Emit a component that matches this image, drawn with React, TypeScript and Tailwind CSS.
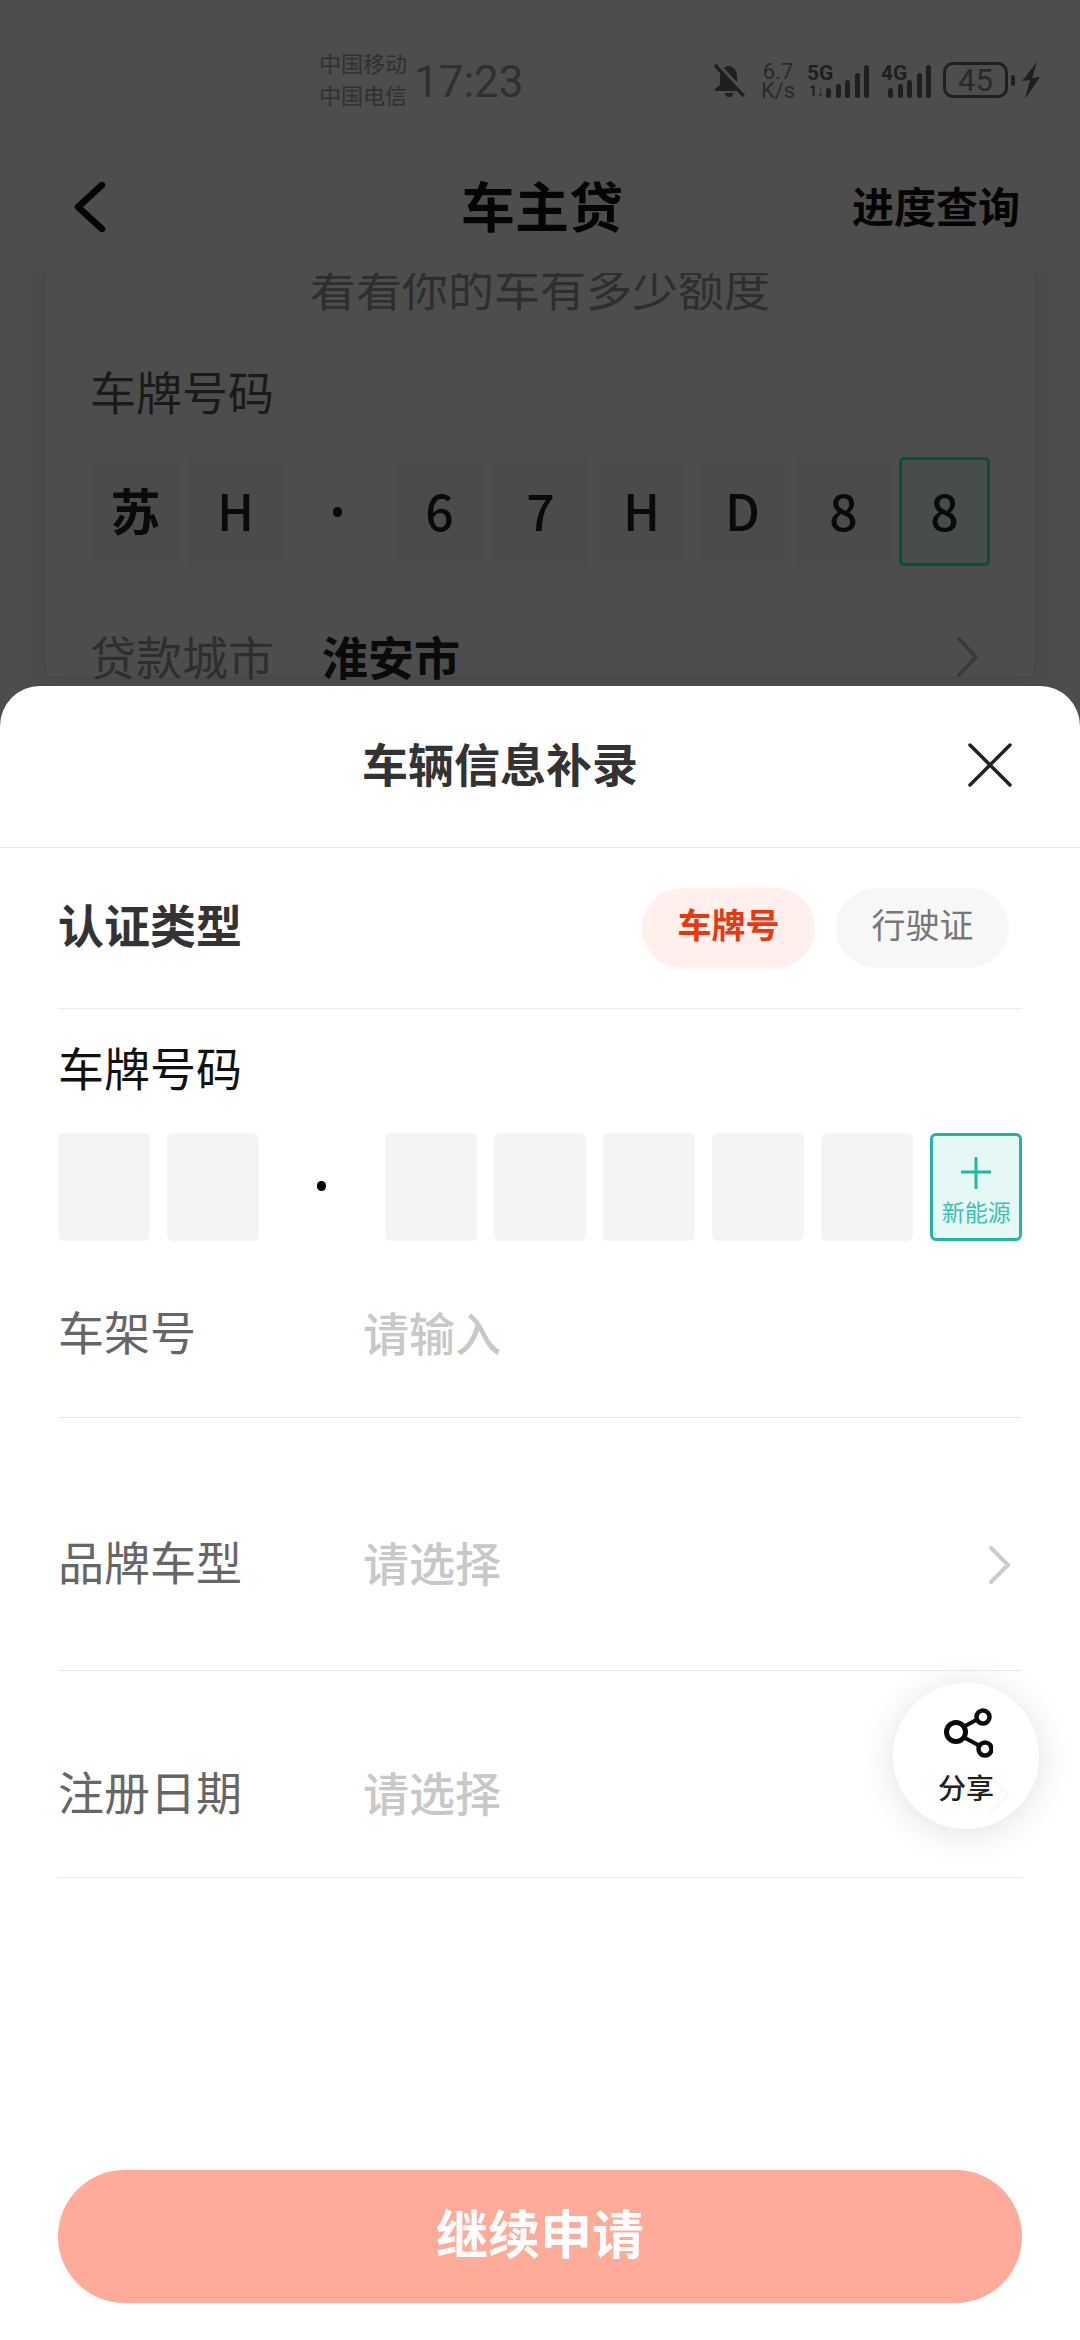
import React from "react";

const cjk = { fontFamily: '"Noto Sans CJK SC", "Noto Sans", sans-serif' };

function Bars({ heights }: { heights: number[] }) {
  return (
    <div className="flex items-end gap-[4.5px] h-[36px]">
      {heights.map((h, i) => (
        <div key={i} className="w-[5px] rounded-full bg-[#1f1f1f]" style={{ height: h }} />
      ))}
    </div>
  );
}

function StatusBar() {
  return (
    <div className="h-[141px] pt-[46px] flex items-start text-[#2c2c2c]">
      <div className="ml-[319px] w-[92px] flex flex-col text-[22px] leading-[32px] text-[#303030] whitespace-nowrap">
        <span>中国移动</span>
        <span>中国电信</span>
      </div>
      <span className="mt-[10px] ml-[3px] text-[44px] leading-[52px] text-[#303030]" style={{ fontFamily: "Roboto, sans-serif" }}>
        17:23
      </span>
      <div className="mt-[16px] ml-auto mr-[39px] flex items-start" style={{ fontFamily: "Roboto, sans-serif" }}>
        <svg width="32" height="36" viewBox="0 0 32 36" className="mt-[1px]">
          <path d="M16 3c-6 0-9 5-9 11v8l-5 4v2h27v-2l-5-4v-8c0-6-3-11-8-11z" fill="#1f1f1f" />
          <path d="M12 30a4 4 0 0 0 8 0z" fill="#1f1f1f" />
          <path d="M2 2l29 31" stroke="#1f1f1f" strokeWidth="3.5" />
          <path d="M6 2l27 29" stroke="#4d4d4d" strokeWidth="3" />
        </svg>
        <div className="ml-[12px] w-[42px] flex flex-col items-center text-[#2a2a2a] text-[22px] leading-[19px]">
          <span>6.7</span>
          <span>K/s</span>
        </div>
        <div className="ml-[8px] relative w-[62px] h-[36px]">
          <span className="absolute left-[0px] top-[1px] text-[21px] leading-[20px] font-bold text-[#1f1f1f]">5G</span>
          <span className="absolute left-[2px] top-[23px] text-[14px] leading-[13px] font-bold text-[#1f1f1f]">1↓</span>
          <div className="absolute left-[19px] top-0">
            <Bars heights={[10, 14, 18, 25, 33]} />
          </div>
        </div>
        <div className="ml-[12px] relative w-[51px] h-[36px]">
          <span className="absolute left-[0px] top-[1px] text-[21px] leading-[20px] font-bold text-[#1f1f1f]">4G</span>
          <div className="absolute left-[7px] top-0">
            <Bars heights={[10, 14, 18, 25, 33]} />
          </div>
        </div>
        <div className="ml-[11px] w-[65px] h-[36px] border-[3px] border-[#1f1f1f] rounded-[10px] flex items-center justify-center text-[31px] leading-none text-[#2a2a2a]">
          45
        </div>
        <div className="ml-[3px] mt-[13px] w-[4px] h-[11px] rounded-[2px] bg-[#1f1f1f]" />
        <svg width="20" height="37" viewBox="0 0 20 37" className="ml-[6px]">
          <path d="M16 0L1 19l8-1-5 19L19 15l-8 1z" fill="#1f1f1f" />
        </svg>
      </div>
    </div>
  );
}

function Header() {
  return (
    <div className="h-[132px] flex items-center relative text-[#050505]">
      <svg width="34" height="50" viewBox="0 0 34 50" className="ml-[72px]">
        <path d="M30 3L6 25l24 22" fill="none" stroke="#050505" strokeWidth="6.5" strokeLinecap="round" strokeLinejoin="round" />
      </svg>
      <span className="ml-[355px] mb-[4px] text-[54px] leading-[60px] font-bold whitespace-nowrap">车主贷</span>
      <span className="ml-[229px] mb-[4px] text-[42px] leading-[50px] font-bold whitespace-nowrap">进度查询</span>
    </div>
  );
}

function DarkBox({ c, active, bold }: { c: string; active?: boolean; bold?: boolean }) {
  return (
    <div
      className={`w-[91px] h-[109px] pb-[5px] rounded-[5px] flex items-center justify-center text-[#0a0a0a] text-[50px] ${
        active ? "border-[3px] border-[#0f4a3f] bg-[#474d4c]" : "bg-[#4a4b4b]"
      } ${bold ? "font-bold" : "font-medium"}`}
    >
      {c}
    </div>
  );
}

function Backdrop() {
  return (
    <div className="h-[413px] overflow-hidden bg-[#4c4c4c]">
      <div className="mx-[46px] h-[413px] bg-[#4d4d4d] shadow-[0_0_22px_rgba(0,0,0,0.08)] relative pl-[44px]">
        <div className="-mt-[10px] -ml-[44px] text-center text-[46px] leading-[46px] text-[#2e2e2e]">看看你的车有多少额度</div>
        <div className="mt-[58px] text-[46px] leading-[46px] text-[#1a1a1a]">车牌号码</div>
        <div className="mt-[44px] flex items-center">
          <DarkBox c="苏" bold />
          <div className="ml-[9px]">
            <DarkBox c="H" />
          </div>
          <div className="w-[113px] flex justify-center">
            <div className="w-[9px] h-[10px] rounded-full bg-[#0a0a0a]" />
          </div>
          <div className="flex gap-[10px]">
            <DarkBox c="6" />
            <DarkBox c="7" />
            <DarkBox c="H" />
            <DarkBox c="D" />
            <DarkBox c="8" />
            <DarkBox c="8" active />
          </div>
        </div>
        <div className="mt-[66px] flex items-center h-[46px]">
          <span className="w-[232px] text-[46px] leading-[46px] text-[#2e2e2e]">贷款城市</span>
          <span className="text-[46px] leading-[46px] font-bold text-[#0a0a0a]">淮安市</span>
          <svg width="24" height="42" viewBox="0 0 24 42" className="ml-auto mr-[55px] mt-[4px]">
            <path d="M3 2l18 19L3 40" fill="none" stroke="#3a3a3a" strokeWidth="3.5" />
          </svg>
        </div>
      </div>
    </div>
  );
}

function LightBox() {
  return <div className="w-[92px] h-[108px] rounded-[6px] bg-[#f3f4f5]" />;
}

function Chevron() {
  return (
    <svg width="24" height="40" viewBox="0 0 24 40" className="ml-auto mr-[10px] mt-[5px]">
      <path d="M3 3l17 17L3 37" fill="none" stroke="#cccccc" strokeWidth="4" strokeLinecap="round" strokeLinejoin="round" />
    </svg>
  );
}

function Row({ label, value, pt, h, chevron }: { label: string; value: string; pt: string; h: string; chevron?: boolean }) {
  return (
    <div className={`${h} ${pt} flex items-center border-b border-[#eaeaea]`}>
      <span className="w-[305px] pb-[5px] text-[46px] leading-[50px] text-[#666666]">{label}</span>
      <span className="pb-[3px] text-[46px] leading-[50px] font-medium text-[#c8c8c8]">{value}</span>
      {chevron && <Chevron />}
    </div>
  );
}

function Sheet() {
  return (
    <div className="flex-1 bg-white rounded-t-[40px] flex flex-col relative">
      <div className="h-[162px] pb-[4px] flex items-center border-b border-[#e8e8e8]">
        <span className="ml-[362px] mb-[6px] text-[46px] leading-[54px] font-bold text-[#333333] whitespace-nowrap">车辆信息补录</span>
        <svg width="46" height="46" viewBox="0 0 46 46" className="ml-[329px]">
          <path d="M3 3l40 40M43 3L3 43" fill="none" stroke="#222222" strokeWidth="3.5" strokeLinecap="round" />
        </svg>
      </div>
      <div className="px-[58px] flex flex-col flex-1">
        <div className="h-[161px] flex items-center border-b border-[#eeeeee]">
          <span className="pb-[10px] text-[46px] leading-[50px] font-bold text-[#333333]">认证类型</span>
          <div className="ml-auto mr-[13px] flex gap-[21px]">
            <div className="w-[173px] h-[80px] pb-[9px] rounded-full bg-[#ffefed] flex items-center justify-center text-[34px] font-bold text-[#e8380d]">车牌号</div>
            <div className="w-[173px] h-[80px] pb-[9px] rounded-full bg-[#f7f7f7] flex items-center justify-center text-[34px] text-[#777777]">行驶证</div>
          </div>
        </div>
        <div className="mt-[34px] text-[46px] leading-[46px] text-[#111111]">车牌号码</div>
        <div className="mt-[44px] flex items-center">
          <LightBox />
          <div className="ml-[17px]">
            <LightBox />
          </div>
          <div className="w-[127px] flex justify-center">
            <div className="w-[9px] h-[10px] rounded-full bg-black mb-[2px]" />
          </div>
          <div className="flex gap-[17px]">
            <LightBox />
            <LightBox />
            <LightBox />
            <LightBox />
            <LightBox />
          </div>
          <div className="ml-[17px] w-[92px] h-[108px] rounded-[6px] border-[3px] border-[#26b5a3] bg-[#e6f8f6] flex flex-col items-center">
            <svg width="30" height="32" viewBox="0 0 30 32" className="mt-[21px]">
              <path d="M15 1v30M1 15h28" stroke="#26b5a3" strokeWidth="3" strokeLinecap="round" />
            </svg>
            <span className="mt-[8px] text-[23px] leading-[28px] text-[#3fc0b2] whitespace-nowrap">新能源</span>
          </div>
        </div>
        <Row label="车架号" value="请输入" h="h-[177px]" pt="pt-[6px]" />
        <Row label="品牌车型" value="请选择" h="h-[253px]" pt="pt-[36px]" chevron />
        <Row label="注册日期" value="请选择" h="h-[207px]" pt="pt-[37px]" chevron />
        <div className="mt-auto mb-[37px] h-[133px] pb-[10px] rounded-full bg-[#ffab99] flex items-center justify-center text-[52px] font-bold text-white">继续申请</div>
      </div>
      <div className="absolute left-[893px] top-[997px] w-[146px] h-[146px] rounded-full bg-white/90 shadow-[0_4px_36px_rgba(0,0,0,0.12)] flex flex-col items-center">
        <svg width="56" height="56" viewBox="0 0 56 56" className="mt-[25px] -ml-[3px]">
          <path d="M28 18L41 11M28 30L43 38" stroke="#0a0a0a" strokeWidth="4" fill="none" />
          <circle cx="19" cy="24" r="9.5" fill="none" stroke="#0a0a0a" strokeWidth="5" />
          <circle cx="46" cy="9" r="6.5" fill="none" stroke="#0a0a0a" strokeWidth="4.5" />
          <circle cx="48" cy="41" r="6.5" fill="none" stroke="#0a0a0a" strokeWidth="4.5" />
        </svg>
        <span className="mt-[6px] text-[28px] leading-[34px] font-medium text-[#222222]">分享</span>
      </div>
    </div>
  );
}

export default function App() {
  return (
    <div className="w-[1080px] h-[2340px] overflow-hidden bg-[#4d4d4d] flex flex-col" style={cjk}>
      <StatusBar />
      <Header />
      <Backdrop />
      <Sheet />
    </div>
  );
}
